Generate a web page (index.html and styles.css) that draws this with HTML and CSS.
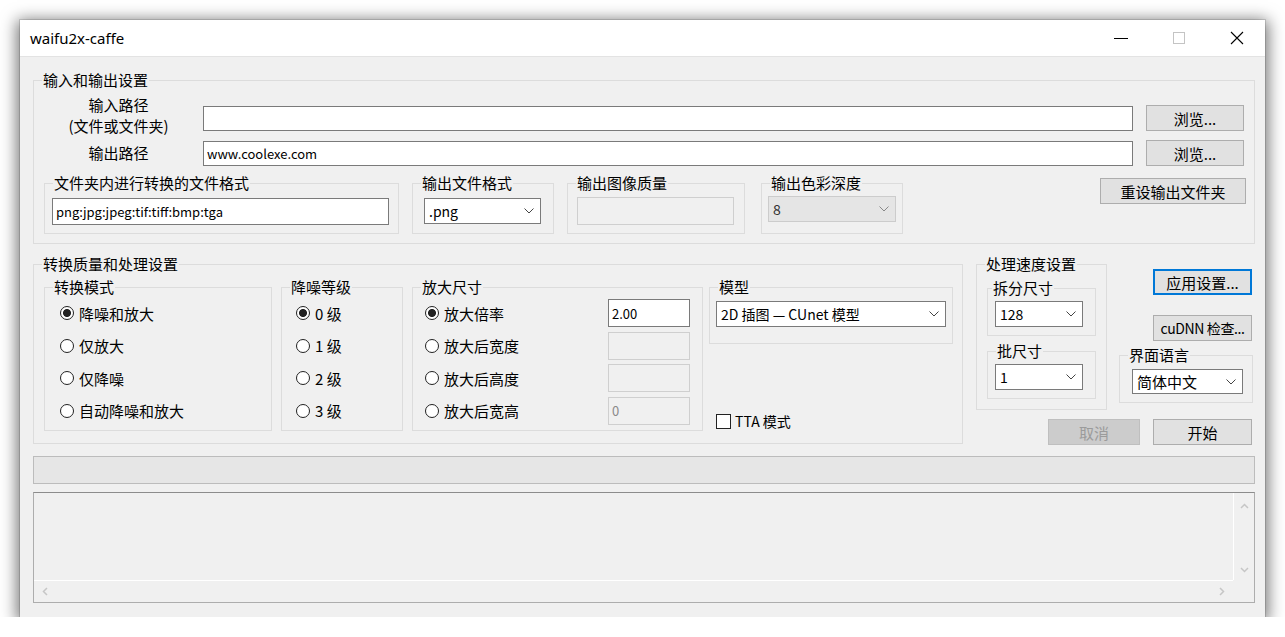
FILE: index.html
```html
<!DOCTYPE html>
<html>
<head>
    <title>waifu2x-caffe</title>
    <link rel="stylesheet" href="styles.css">
</head>
<body>
<div class="window">
    <div class="titlebar">
        <span class="title">waifu2x-caffe</span>
        <div class="cap-btn"><svg width="14" height="14"><line x1="0" y1="7.5" x2="14" y2="7.5" stroke="#000" stroke-width="1"/></svg></div>
        <div class="cap-btn"><svg width="14" height="14"><rect x="1.5" y="1.5" width="11" height="11" fill="none" stroke="#c4c4c4" stroke-width="1"/></svg></div>
        <div class="cap-btn close"><svg width="14" height="14"><path d="M1 1 L13 13 M13 1 L1 13" stroke="#000" stroke-width="1.1"/></svg></div>
    </div>

    <div class="client">
        <!-- 输入和输出 -->
        <fieldset class="grp io">
            <legend>输入和输出设置</legend>
            <div class="path-row first">
                <div class="path-label"><div>输入路径</div><div>(文件或文件夹)</div></div>
                <input class="edit path" type="text" value="">
                <button class="btn browse">浏览...</button>
            </div>
            <div class="path-row second">
                <div class="path-label">输出路径</div>
                <input class="edit path" type="text" value="www.coolexe.com">
                <button class="btn browse">浏览...</button>
            </div>
            <div class="fmt-row">
                <fieldset class="sub ext-box">
                    <legend>文件夹内进行转换的文件格式</legend>
                    <input class="edit ext" type="text" value="png:jpg:jpeg:tif:tiff:bmp:tga">
                </fieldset>
                <fieldset class="sub outfmt-box">
                    <legend>输出文件格式</legend>
                    <div class="combo outfmt"><span>.png</span><svg width="10" height="6"><polyline points="0.5,0.5 5,5 9.5,0.5" fill="none" stroke="#444"/></svg></div>
                </fieldset>
                <fieldset class="sub quality-box">
                    <legend>输出图像质量</legend>
                    <input class="edit off quality" type="text" value="" disabled>
                </fieldset>
                <fieldset class="sub depth-box">
                    <legend>输出色彩深度</legend>
                    <div class="combo off depth"><span>8</span><svg width="10" height="6"><polyline points="0.5,0.5 5,5 9.5,0.5" fill="none" stroke="#888"/></svg></div>
                </fieldset>
                <button class="btn reset">重设输出文件夹</button>
            </div>
        </fieldset>

        <div class="mid-row">
            <!-- 转换质量 -->
            <fieldset class="grp conv">
                <legend>转换质量和处理设置</legend>
                <div class="conv-inner">
                    <fieldset class="sub mode-box">
                        <legend>转换模式</legend>
                        <div class="opt"><span class="radio on"></span>降噪和放大</div>
                        <div class="opt"><span class="radio"></span>仅放大</div>
                        <div class="opt"><span class="radio"></span>仅降噪</div>
                        <div class="opt"><span class="radio"></span>自动降噪和放大</div>
                    </fieldset>
                    <fieldset class="sub noise-box">
                        <legend>降噪等级</legend>
                        <div class="opt"><span class="radio on"></span>0 级</div>
                        <div class="opt"><span class="radio"></span>1 级</div>
                        <div class="opt"><span class="radio"></span>2 级</div>
                        <div class="opt"><span class="radio"></span>3 级</div>
                    </fieldset>
                    <fieldset class="sub scale-box">
                        <legend>放大尺寸</legend>
                        <div class="opt"><span class="radio on"></span>放大倍率<input class="edit num" type="text" value="2.00"></div>
                        <div class="opt"><span class="radio"></span>放大后宽度<input class="edit off num" type="text" value="" disabled></div>
                        <div class="opt"><span class="radio"></span>放大后高度<input class="edit off num" type="text" value="" disabled></div>
                        <div class="opt"><span class="radio"></span>放大后宽高<input class="edit off num" type="text" value="0" disabled></div>
                    </fieldset>
                    <div class="model-col">
                        <fieldset class="sub model-box">
                            <legend>模型</legend>
                            <div class="combo model"><span>2D 插图 — CUnet 模型</span><svg width="10" height="6"><polyline points="0.5,0.5 5,5 9.5,0.5" fill="none" stroke="#444"/></svg></div>
                        </fieldset>
                        <div class="check-row"><span class="check"></span>TTA 模式</div>
                    </div>
                </div>
            </fieldset>

            <!-- 处理速度 + 右侧按钮 -->
            <div class="right-area">
                <div class="speed-top">
                    <fieldset class="grp speed">
                        <legend>处理速度设置</legend>
                        <fieldset class="sub split-box first">
                            <legend>拆分尺寸</legend>
                            <div class="combo small"><span>128</span><svg width="10" height="6"><polyline points="0.5,0.5 5,5 9.5,0.5" fill="none" stroke="#444"/></svg></div>
                        </fieldset>
                        <fieldset class="sub split-box">
                            <legend>批尺寸</legend>
                            <div class="combo small"><span>1</span><svg width="10" height="6"><polyline points="0.5,0.5 5,5 9.5,0.5" fill="none" stroke="#444"/></svg></div>
                        </fieldset>
                    </fieldset>
                    <div class="side-col">
                        <button class="btn side apply">应用设置...</button>
                        <button class="btn side cudnn">cuDNN 检查...</button>
                        <fieldset class="sub lang-box">
                            <legend>界面语言</legend>
                            <div class="combo lang"><span>简体中文</span><svg width="10" height="6"><polyline points="0.5,0.5 5,5 9.5,0.5" fill="none" stroke="#444"/></svg></div>
                        </fieldset>
                    </div>
                </div>
                <div class="speed-bottom">
                    <button class="btn cancel" disabled>取消</button>
                    <button class="btn start">开始</button>
                </div>
            </div>
        </div>

        <div class="progress"></div>

        <div class="log">
            <div class="log-text"></div>
            <div class="vscroll">
                <svg width="9" height="6"><polyline points="1,5 4.5,1.5 8,5" fill="none" stroke="#c6c6c6" stroke-width="1.5"/></svg>
                <svg width="9" height="6"><polyline points="1,1 4.5,4.5 8,1" fill="none" stroke="#c6c6c6" stroke-width="1.5"/></svg>
            </div>
            <div class="hscroll">
                <svg width="6" height="9"><polyline points="5,1 1.5,4.5 5,8" fill="none" stroke="#c6c6c6" stroke-width="1.5"/></svg>
                <svg width="6" height="9"><polyline points="1,1 4.5,4.5 1,8" fill="none" stroke="#c6c6c6" stroke-width="1.5"/></svg>
            </div>
            <div class="corner"></div>
        </div>
    </div>
</div>
</body>
</html>
```

FILE: styles.css
```css
* {
    box-sizing: border-box;
}
body {
    margin: 0;
    background: #fff;
    font-family: "Noto Sans CJK SC", "Noto Sans", sans-serif;
    font-size: 15px;
    color: #000;
}

.window {
    width: 1245px;
    height: 597px;
    margin: 20px 0 0 20px;
    background: #f0f0f0;
    box-shadow: 0 0 0 1px rgba(0, 0, 0, 0.12), 0 3px 15px 3px rgba(0, 0, 0, 0.55);
}

.titlebar {
    height: 37px;
    background: #fff;
    border-bottom: 1px solid #e3e3e3;
    display: flex;
    align-items: center;
}
.title {
    flex: 1;
    padding-left: 10px;
    font-family: "Segoe UI", "Noto Sans", sans-serif;
    font-size: 15px;
}
.cap-btn {
    width: 58px;
    height: 36px;
    display: flex;
    align-items: center;
    justify-content: center;
}
.cap-btn.close {
    width: 57px;
}

.client {
    padding: 14px 0 0 13px;
}

fieldset {
    margin: 0;
    padding: 0;
    min-width: 0;
    border: 1px solid #dcdcdc;
}
legend {
    margin-left: 8px;
    padding: 0 1px;
    line-height: 18px;
}

.edit {
    display: block;
    font-family: inherit;
    font-size: 13px;
    color: #000;
    background: #fff;
    border: 1px solid #7a7a7a;
    padding: 0 3px;
    margin: 0;
    outline: none;
}
.edit.off {
    background: #f0f0f0;
    border-color: #cfcfcf;
    color: #8a8a8a;
}

.btn {
    font-family: inherit;
    font-size: 15px;
    color: #000;
    background: #e1e1e1;
    border: 1px solid #adadad;
    padding: 0;
    margin: 0;
    height: 26px;
}

.combo {
    display: flex;
    align-items: center;
    justify-content: space-between;
    background: #fff;
    border: 1px solid #7a7a7a;
    padding: 0 6px 0 4px;
    font-size: 14px;
    height: 26px;
}
.combo.off {
    background: #e5e5e5;
    border-color: #cccccc;
    color: #333;
}

/* 输入和输出设置 */
.io {
    width: 1222px;
    padding: 0 0 9px 0;
}
.path-row {
    display: flex;
    align-items: flex-start;
}
.path-row.first {
    margin-top: 8px;
    height: 36px;
}
.path-row.first .path-label {
    margin-top: -3px;
    line-height: 21px;
}
.path-row.first .edit {
    margin-top: 9px;
}
.path-row.first .browse {
    margin-top: 8px;
}
.path-row.second {
    margin-top: 7px;
    height: 26px;
    align-items: center;
}
.path-label {
    width: 169px;
    text-align: center;
    line-height: 18px;
}
.edit.path {
    width: 930px;
    height: 25px;
}
.browse {
    width: 98px;
    margin-left: 13px;
}

.fmt-row {
    display: flex;
    margin-top: 8px;
    padding: 0 8px 0 10px;
}
.ext-box {
    width: 355px;
}
.edit.ext {
    width: 337px;
    height: 27px;
    margin: 6px 0 8px 7px;
}
.outfmt-box {
    width: 142px;
    margin-left: 13px;
}
.combo.outfmt {
    width: 117px;
    margin: 6px 0 0 11px;
}
.quality-box {
    width: 178px;
    margin-left: 13px;
}
.edit.quality {
    width: 157px;
    height: 28px;
    margin: 5px 0 0 9px;
}
.depth-box {
    width: 142px;
    margin-left: 16px;
}
.combo.depth {
    width: 128px;
    margin: 4px 0 0 6px;
}
.reset {
    width: 146px;
    margin-left: auto;
    margin-top: 4px;
}

/* 中间一行 */
.mid-row {
    display: flex;
    align-items: flex-start;
    margin-top: 11px;
}
.conv {
    width: 930px;
    padding: 0 9px 12px 0;
}
.conv-inner {
    display: flex;
    align-items: flex-start;
    margin: 5px 0 0 10px;
}
.mode-box,
.noise-box,
.scale-box {
    height: 153px;
    padding-top: 1px;
}
.mode-box {
    width: 228px;
}
.mode-box .opt {
    padding-left: 15px;
}
.noise-box {
    width: 122px;
    margin-left: 9px;
}
.noise-box .opt {
    padding-left: 14px;
}
.scale-box {
    width: 291px;
    margin-left: 9px;
}
.scale-box .opt {
    padding: 0 12px;
}
.opt {
    display: flex;
    align-items: center;
    height: 32.5px;
}
.radio {
    flex: none;
    width: 14px;
    height: 14px;
    margin-right: 5px;
    border: 1px solid #222;
    border-radius: 50%;
    background: #fff;
}
.radio.on {
    background: radial-gradient(circle, #222 0, #222 3.6px, #fff 4.4px);
}
.edit.num {
    margin-left: auto;
    width: 82px;
    height: 28px;
}

.model-col {
    width: 244px;
    margin-left: 6px;
}
.model-box {
    height: 66px;
}
.combo.model {
    width: 230px;
    margin: 5px 0 0 6px;
}
.check-row {
    display: flex;
    align-items: center;
    margin: 67px 0 0 7px;
    font-size: 14px;
}
.check {
    flex: none;
    width: 15px;
    height: 15px;
    margin-right: 4px;
    border: 1px solid #222;
    background: #fff;
}

/* 右侧 */
.right-area {
    width: 277px;
    margin-left: 13px;
}
.speed-top {
    display: flex;
    align-items: flex-start;
}
.speed {
    width: 131px;
    padding: 0 0 10px 0;
}
.split-box {
    width: 109px;
    margin: 6px 0 0 10px;
}
.split-box.first legend {
    margin-left: 4px;
}
.combo.small {
    width: 88px;
    margin: 4px 0 8px 7px;
}
.side-col {
    width: 134px;
    margin-left: 12px;
    padding-top: 14px;
}
.side {
    display: block;
    width: 99px;
    margin-left: 34px;
}
.apply {
    border-color: #0078d7;
    box-shadow: inset 0 0 0 1px #0078d7;
}
.cudnn {
    margin-top: 20px;
    font-size: 14px;
    letter-spacing: -0.4px;
}
.lang-box {
    margin-top: 5px;
}
.combo.lang {
    width: 111px;
    height: 25px;
    margin: 5px 0 8px 12px;
    font-size: 15px;
}
.speed-bottom {
    display: flex;
    justify-content: flex-end;
    margin-top: 9px;
    padding-right: 1px;
}
.cancel {
    width: 92px;
    background: #cccccc;
    border-color: #bfbfbf;
    color: #9b9b9b;
}
.start {
    width: 99px;
    margin-left: 13px;
}

/* 进度条和日志 */
.progress {
    width: 1222px;
    height: 28px;
    margin-top: 11px;
    background: #e6e6e6;
    border: 1px solid #bcbcbc;
}
.log {
    width: 1222px;
    height: 111px;
    margin-top: 8px;
    border: 1px solid #adadad;
    border-top-color: #8c8c8c;
    display: grid;
    grid-template-columns: 1fr 21px;
    grid-template-rows: 1fr 22px;
}
.vscroll {
    border-left: 1px solid #fff;
    display: flex;
    flex-direction: column;
    align-items: center;
    justify-content: space-between;
    padding: 10px 0 7px;
}
.hscroll {
    border-top: 1px solid #fff;
    display: flex;
    align-items: center;
    justify-content: space-between;
    padding: 0 8px;
}
```
